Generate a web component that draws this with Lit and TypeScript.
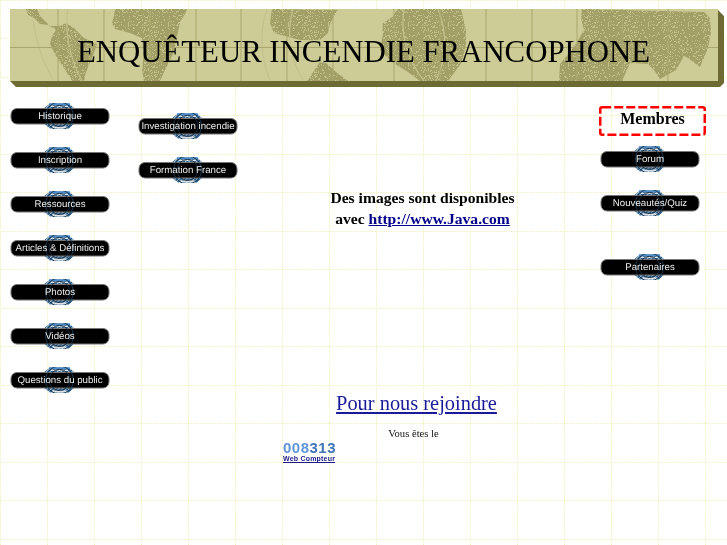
import { LitElement, html, css, svg } from "lit";
import { customElement, property } from "lit/decorators.js";

function dots() {
  const out = [];
  let s = 7;
  const r = () => (s = (s * 16807) % 2147483647) / 2147483647;
  for (let i = 0; i < 320; i++) {
    out.push(svg`<rect x=${Math.floor(r() * 40)} y=${Math.floor(r() * 40)} width="1" height="1" fill="#c2c08b" />`);
  }
  return out;
}

const LAND = [
  "M26 9 L37 9 L40 16 L46 22 L50 26 L60 26 L66 23 L74 28 L84 38 L97 44 L92 58 L86 72 L84 81 L72 81 L64 68 L56 56 L50 44 L52 36 L56 30 L48 25 L40 24 L34 18 L28 15 Z",
  "M115 9 L187 9 L185 14 L180 22 L178 32 L176 42 L173 54 L166 68 L160 81 L144 81 L142 70 L144 52 L142 38 L130 33 L115 29 L112 23 L114 16 Z",
  "M272 9 L338 10 L334 16 L330 24 L328 33 L320 40 L300 40 L274 33 L270 24 L271 16 Z",
  "M307 81 L320 62 L326 63 L336 72 L348 81 Z",
  "M383 34 L382 24 L392 17 L398 9 L461 9 L466 30 L466 44 L462 62 L448 81 L420 81 L408 72 L392 62 L380 50 Z",
  "M582 9 L704 12 L710 18 L711 32 L708 48 L700 67 L688 58 L684 56 L676 70 L660 79 L654 70 L648 64 L630 63 L622 81 L559 81 L560 64 L570 52 L577 42 L584 30 L581 18 Z",
];
const MERIDIANS = [
  "M33 20 C36 40 42 62 54 81",
  "M68 9 C64 30 70 60 82 81",
  "M267 9 C258 35 262 60 270 81",
  "M293 9 C286 35 290 60 304 81",
  "M404 9 C400 35 408 60 424 81",
  "M438 9 C448 35 446 60 436 81",
];
const GRID_X = [58, 104, 150, 196, 241, 287, 333, 394, 440, 486, 532, 577, 622, 668];

@customElement("pill-button")
class PillButton extends LitElement {
  @property() label = "";
  static styles = css`
    :host { display: block; width: 100px; height: 26px; position: relative; }
    svg { position: absolute; inset: 0; width: 100px; height: 26px; display: block; }
    span {
      position: absolute; left: 0; right: 0; top: 6px; height: 16px;
      text-align: center; color: #ececec; white-space: nowrap;
      font: 9.7px/15px "Liberation Sans", Arial, sans-serif;
      text-rendering: geometricPrecision;
    }
  `;
  render() {
    return html`<svg viewBox="0 0 100 26" aria-hidden="true">
        <defs>
          <pattern id="hatch" width="2.6" height="2.6" patternUnits="userSpaceOnUse" patternTransform="rotate(45)">
            <rect width="2.6" height="2.6" fill="#2c6090" />
            <rect width="0.9" height="2.6" fill="#a8bccd" />
          </pattern>
        </defs>
        <path d="M40 0.5 H59 L65 6 V20 L59 25.5 H40 L33 20 V6 Z" fill="url(#hatch)" />
        <path d="M39 1.2 H60" fill="none" stroke="#4d8ac8" stroke-width="1.8" />
        <path d="M41 3.4 H58" stroke="#f0f3f6" stroke-width="1" />
        <path d="M42 24.2 H57" stroke="#e8edf2" stroke-width="1.4" />
        <rect x="1" y="5.5" width="98" height="15.5" rx="6" fill="#000" stroke="#777" stroke-width="1" />
        <circle cx="49.5" cy="13" r="14" fill="none" stroke="#17384f" stroke-width="1" />
        <circle cx="49.5" cy="13" r="10.5" fill="none" stroke="#10293a" stroke-width="1" />
      </svg>
      <span>${this.label}</span>`;
  }
}

@customElement("app-root")
class AppRoot extends LitElement {
  static styles = css`
    :host {
      display: block; height: 545px; overflow: hidden;
      background-color: #fff;
      background-image: url("data:image/svg+xml,%3Csvg xmlns='http://www.w3.org/2000/svg' width='47' height='38.5'%3E%3Cpath d='M.5 0V38.5M0 .5H47' stroke='%23f2f2c4' stroke-width='1.2' stroke-dasharray='1.4 1' fill='none'/%3E%3C/svg%3E");
      background-size: 47px 38.5px;
      font-family: "Liberation Serif", "Times New Roman", serif;
      color: #000;
    }
    .root { filter: blur(0.3px); }
    .banner { position: relative; height: 95px; display: flex; justify-content: center; padding-top: 34px; box-sizing: border-box; }
    .banner svg { position: absolute; left: 0; top: 0; width: 727px; height: 95px; }
    h1 { position: relative; margin: 0; font-size: 30.8px; line-height: 37px; font-weight: 400; white-space: nowrap; }
    .main { display: flex; height: 450px; }
    .col { display: flex; flex-direction: column; }
    .col1 { width: 100px; margin-left: 10px; padding-top: 8px; gap: 18px; }
    .col2 { width: 100px; margin-left: 28px; padding-top: 18px; gap: 18px; }
    .center { width: 362px; }
    .java { margin-top: 92px; padding-left: 7px; text-align: center; font-size: 15.6px; font-weight: 700; line-height: 21px; }
    a { color: #00008b; }
    .join { margin-top: 163px; padding-right: 5px; text-align: center; font-size: 20.4px; line-height: 23px; }
    .join a { color: #1a1a9a; }
    .here { margin-top: 13px; padding-right: 11px; text-align: center; font-size: 10.6px; line-height: 12px; color: #111; }
    .counter { margin: 0 0 0 45px; font-family: "Liberation Sans", Arial, sans-serif; }
    .digits { font-size: 15px; line-height: 15px; font-weight: 700; letter-spacing: 0.5px; color: #3f74b8; }
    .digits b { color: #5f95d8; }
    .webc { display: block; font-size: 7px; line-height: 8px; font-weight: 700; letter-spacing: 0.2px; color: #1a1a8a; }
    .col3 { width: 100px; padding-top: 11px; align-items: flex-start; }
    .members {
      position: relative; width: 107px; height: 30px; flex: none; margin-left: -1px;
      text-align: center; font-size: 16px; font-weight: 700; line-height: 26px;
    }
    .members svg { position: absolute; inset: 0; width: 107px; height: 30px; }
    .forum { margin-top: 10px; }
    .quiz { margin-top: 18px; }
    .partners { margin-top: 38px; }
  `;

  render() {
    return html`<div class="root">
      <header class="banner">
        <svg viewBox="0 0 727 95" aria-hidden="true">
          <defs>
            <pattern id="dither" width="40" height="40" patternUnits="userSpaceOnUse">
              <rect width="40" height="40" fill="#a2a067" />
              ${dots()}
            </pattern>
          </defs>
          <path d="M10 81 L16 87 H720 L724 83 V16 L718 10 V81 Z" fill="#6d6a34" />
          <rect x="10" y="9" width="708" height="72" fill="#cdcc96" />
          ${LAND.map((d) => svg`<path d=${d} fill="url(#dither)" />`)}
          ${MERIDIANS.map((d) => svg`<path d=${d} fill="none" stroke="#c4c28c" stroke-width="1.2" />`)}
          ${GRID_X.map((x) => svg`<path d="M${x} 9 V81" stroke="#a9a76d" stroke-width="1" />`)}
          <path d="M10 47.5 H718" stroke="#a9a76d" stroke-width="1" />
        </svg>
        <h1>ENQUÊTEUR INCENDIE FRANCOPHONE</h1>
      </header>
      <div class="main">
        <nav class="col col1">
          ${["Historique", "Inscription", "Ressources", "Articles & Définitions", "Photos", "Vidéos", "Questions du public"].map(
            (l) => html`<pill-button label=${l}></pill-button>`
          )}
        </nav>
        <nav class="col col2">
          <pill-button label="Investigation incendie"></pill-button>
          <pill-button label="Formation France"></pill-button>
        </nav>
        <main class="center">
          <div class="java">Des images sont disponibles<br />avec <a href="#">http://www.Java.com</a></div>
          <div class="join"><a href="#">Pour nous rejoindre</a></div>
          <div class="here">Vous êtes le</div>
          <div class="counter">
            <div class="digits"><b>008</b>313</div>
            <a class="webc" href="#">Web Compteur</a>
          </div>
        </main>
        <aside class="col col3">
          <div class="members">
            <svg viewBox="0 0 107 30" aria-hidden="true">
              <rect x="1.25" y="1.25" width="104.5" height="27.5" rx="2" fill="none" stroke="#f00" stroke-width="2.5" stroke-dasharray="9 3" />
            </svg>
            Membres
          </div>
          <pill-button class="forum" label="Forum"></pill-button>
          <pill-button class="quiz" label="Nouveautés/Quiz"></pill-button>
          <pill-button class="partners" label="Partenaires"></pill-button>
        </aside>
      </div>
    </div>`;
  }
}
